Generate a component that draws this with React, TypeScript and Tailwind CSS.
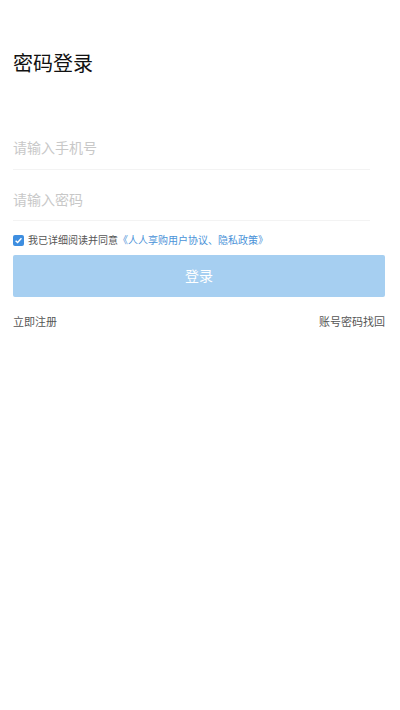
import React from "react";

export default function App() {
  return (
    <div
      className="w-[400px] h-[710px] bg-white pl-[13px] pr-[15px] pt-[48px]"
      style={{ fontFamily: '"Noto Sans CJK SC", "Noto Sans", sans-serif' }}
    >
      <h1 className="text-[20px] leading-[30px] text-[#111] font-normal">密码登录</h1>

      <div className="mt-[41px] mr-[15px]">
        <div className="h-[51px] pt-[18px] border-b border-[#f3f3f3]">
          <input
            className="block w-full h-[20px] text-[14px] leading-[20px] outline-none placeholder:text-[#c8c8c8] text-[#333]"
            placeholder="请输入手机号"
          />
        </div>
        <div className="h-[51px] pt-[19px] border-b border-[#f3f3f3]">
          <input
            type="password"
            className="block w-full h-[20px] text-[14px] leading-[20px] outline-none placeholder:text-[#c8c8c8] text-[#333]"
            placeholder="请输入密码"
          />
        </div>
      </div>

      <div className="mt-[9px] h-[20px] flex items-center">
        <span className="w-[11px] h-[11px] rounded-[2px] bg-[#3e8ee0] flex items-center justify-center shrink-0">
          <svg width="9" height="9" viewBox="0 0 10 10">
            <path d="M1.8 5.2 L4 7.3 L8.3 2.6" fill="none" stroke="#fff" strokeWidth="1.6" />
          </svg>
        </span>
        <span className="ml-[4px] text-[10px] leading-[14px] text-[#555] whitespace-nowrap">
          我已详细阅读并同意
          <span className="text-[#4a92d8]">《人人享购用户协议、隐私政策》</span>
        </span>
      </div>

      <button className="mt-[5px] w-full h-[42px] rounded-[2px] bg-[#a6cff1] text-white text-[14px] leading-[20px] flex items-center justify-center pb-[2px]">
        登录
      </button>

      <div className="mt-[16px] flex justify-between text-[11px] leading-[16px] text-[#555]">
        <span>立即注册</span>
        <span>账号密码找回</span>
      </div>
    </div>
  );
}
